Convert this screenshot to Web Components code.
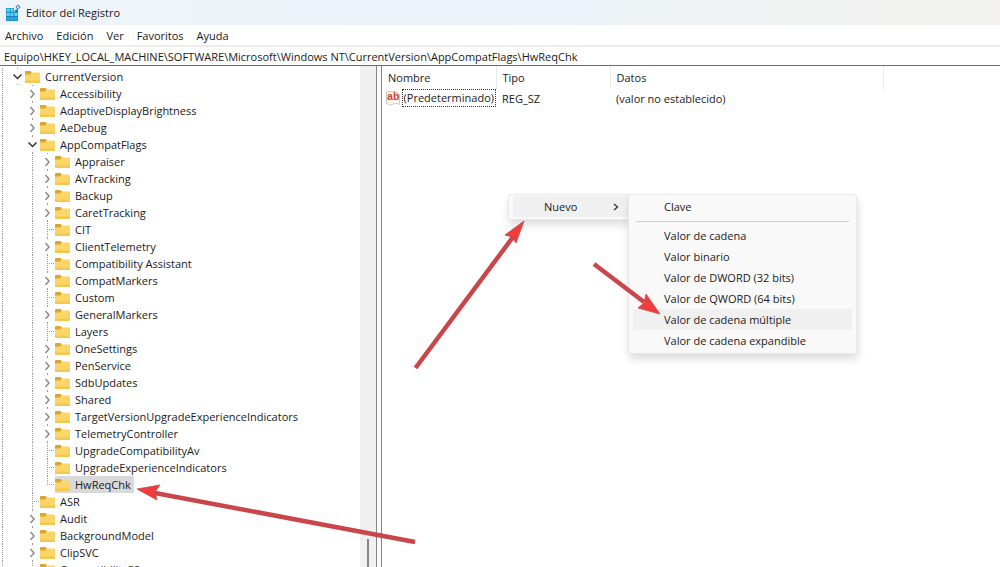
<!DOCTYPE html>
<html lang="es">
<head>
<meta charset="utf-8">
<title>Editor del Registro</title>
<style>
  html, body { margin: 0; height: 100%; overflow: hidden; background: #fff; }
  body { font: 11px/17px "Open Sans", "Noto Sans", sans-serif; color: #1a1a1a; }
</style>
</head>
<body>
<reg-window heading="Editor del Registro">
  <menu-bar slot="menu">
    <bar-item>Archivo</bar-item><bar-item>Edición</bar-item><bar-item>Ver</bar-item><bar-item>Favoritos</bar-item><bar-item>Ayuda</bar-item>
  </menu-bar>
  <address-bar slot="address" value="Equipo\HKEY_LOCAL_MACHINE\SOFTWARE\Microsoft\Windows NT\CurrentVersion\AppCompatFlags\HwReqChk"></address-bar>
  <key-tree slot="tree">
    <tree-row level="1" state="open">CurrentVersion</tree-row>
    <tree-row level="2" state="closed">Accessibility</tree-row>
    <tree-row level="2" state="closed">AdaptiveDisplayBrightness</tree-row>
    <tree-row level="2" state="closed">AeDebug</tree-row>
    <tree-row level="2" state="open">AppCompatFlags</tree-row>
    <tree-row level="3" state="closed">Appraiser</tree-row>
    <tree-row level="3" state="closed">AvTracking</tree-row>
    <tree-row level="3" state="closed">Backup</tree-row>
    <tree-row level="3" state="closed">CaretTracking</tree-row>
    <tree-row level="3">CIT</tree-row>
    <tree-row level="3" state="closed">ClientTelemetry</tree-row>
    <tree-row level="3">Compatibility Assistant</tree-row>
    <tree-row level="3" state="closed">CompatMarkers</tree-row>
    <tree-row level="3">Custom</tree-row>
    <tree-row level="3" state="closed">GeneralMarkers</tree-row>
    <tree-row level="3">Layers</tree-row>
    <tree-row level="3" state="closed">OneSettings</tree-row>
    <tree-row level="3" state="closed">PenService</tree-row>
    <tree-row level="3" state="closed">SdbUpdates</tree-row>
    <tree-row level="3" state="closed">Shared</tree-row>
    <tree-row level="3" state="closed">TargetVersionUpgradeExperienceIndicators</tree-row>
    <tree-row level="3" state="closed">TelemetryController</tree-row>
    <tree-row level="3">UpgradeCompatibilityAv</tree-row>
    <tree-row level="3">UpgradeExperienceIndicators</tree-row>
    <tree-row level="3" last selected>HwReqChk</tree-row>
    <tree-row level="2">ASR</tree-row>
    <tree-row level="2" state="closed">Audit</tree-row>
    <tree-row level="2" state="closed">BackgroundModel</tree-row>
    <tree-row level="2" state="closed">ClipSVC</tree-row>
    <tree-row level="2">Compatibility32</tree-row>
  </key-tree>
  <value-table slot="values"></value-table>
</reg-window>
<context-menu style="--x: 508px; --y: 194px; --w: 122px; --pad: 1px 0 2px 4px">
  <menu-entry submenu active>Nuevo</menu-entry>
</context-menu>
<context-menu style="--x: 628px; --y: 194px; --w: 229px; --pad: 1px 4px 2px">
  <menu-entry>Clave</menu-entry>
  <menu-rule></menu-rule>
  <menu-entry>Valor de cadena</menu-entry>
  <menu-entry>Valor binario</menu-entry>
  <menu-entry>Valor de DWORD (32 bits)</menu-entry>
  <menu-entry>Valor de QWORD (64 bits)</menu-entry>
  <menu-entry active>Valor de cadena múltiple</menu-entry>
  <menu-entry>Valor de cadena expandible</menu-entry>
</context-menu>
<arrow-layer></arrow-layer>

<script>
const define = (name, html, setup) => {
  const template = document.createElement('template');
  template.innerHTML = html;
  customElements.define(name, class extends HTMLElement {
    constructor() {
      super();
      this.attachShadow({ mode: 'open' }).append(template.content.cloneNode(true));
    }
    connectedCallback() { if (setup) setup(this, this.shadowRoot); }
  });
};

define('reg-window', `
<style>
  :host { display: grid; grid-template-rows: 25px 20px 21px minmax(0, 1fr); height: 100vh; }
  header { display: flex; align-items: center; gap: 5px; padding: 0 5px; background: linear-gradient(90deg, #eff4f9, #edf2fb 57%, #eef3f5 63%, #f3f2ef); }
  h1 { margin: 0; font: inherit; }
  main { display: grid; grid-template-columns: minmax(0, 376px) 6px minmax(0, 1fr); min-height: 0; }
  .split { box-sizing: border-box; background: #fafafa; border: solid #858585; border-width: 0 1px; }
</style>
<header>
  <svg width="16" height="18" viewBox="0 0 16 18" aria-hidden="true">
    <path d="M1 4h12v13H1z" fill="#1583bf"/>
    <path d="M1.500 4.500h3.300v3.300H1.500zM5.500 4.500h3v3.300h-3zM1.500 8.700h3.300v3.300H1.500zM5.500 8.700h3v3.300h-3zM9.300 8.700h3.200v3.300H9.300z" fill="#5ed0f5"/>
    <path d="M1.500 13h3.300v3.500H1.500zM5.500 13h3v3.500h-3zM9.300 13h3.200v3.500H9.300z" fill="#2fa6dc"/>
    <path d="M9 4h4v4H9z" fill="#dff0fa"/>
    <path d="M9 7l3-2 1.500 2-2 1.500z" fill="#1b6fa8"/>
    <path d="M13 1l2.200 2L13 5.200 10.800 3z" fill="#bfe3f5" stroke="#2f7ea9"/>
  </svg>
  <h1></h1>
</header>
<slot name="menu"></slot><slot name="address"></slot>
<main><slot name="tree"></slot><div class="split"></div><slot name="values"></slot></main>`,
(host, root) => { root.querySelector('h1').textContent = host.getAttribute('heading'); });

define('menu-bar', `
<style>:host { display: flex; align-items: center; gap: 13px; padding: 0 5px; background: #fff; }</style>
<slot></slot>`);

define('bar-item', `
<style>
  :host { display: block; }
  button { all: unset; display: block; }
</style>
<button type="button"><slot></slot></button>`);

define('address-bar', `
<style>
  :host { display: flex; box-sizing: border-box; border-top: 2px solid #ececec; border-bottom: 1px solid #6c6c6c; background: #fff; }
  input { flex: 1; min-width: 0; border: 0; outline: 0; margin: 0; padding: 0 4px; font: inherit; color: inherit; background: none; }
</style>
<input type="text" aria-label="Ruta de la clave">`,
(host, root) => { root.querySelector('input').value = host.getAttribute('value'); });

define('key-tree', `
<style>
  :host { display: grid; grid-template-columns: minmax(0, 1fr) 16px; min-height: 0; overflow: hidden; }
  .rows { overflow: hidden; padding-top: 2px; }
  .track { display: flex; flex-direction: column; justify-content: flex-end; align-items: center; background: #f0f0f0; }
  .thumb { width: 2px; height: 28px; background: #858585; }
</style>
<div class="rows" role="tree"><slot></slot></div>
<div class="track"><div class="thumb"></div></div>`);

define('tree-row', `
<style>
  :host { display: flex; height: 17px; white-space: nowrap; --dots: repeating-linear-gradient(#999 0 1px, transparent 1px 2px); }
  .root, .guide, .toggle { flex: none; width: 15px; background: var(--dots) 7px 0 / 1px 100% no-repeat; }
  .root { width: 10px; background-position: 2px 0; }
  .blank { background: none; }
  .toggle { display: flex; align-items: center; justify-content: center; }
  button { all: unset; display: flex; background: #fff; padding: 2px 0; }
  svg { display: block; }
  .dash { width: 6px; height: 1px; margin-left: 9px; background: repeating-linear-gradient(90deg, #999 0 1px, transparent 1px 2px); }
  :host([last]) .toggle { background-size: 1px 9px; }
  .item { display: flex; align-items: center; gap: 5px; padding-right: 3px; }
  :host([selected]) .item { background: #d9d9d9; }
</style>
<span class="root"></span><span class="toggle"></span>
<span class="item" role="treeitem">
  <svg width="15" height="14" viewBox="0 0 15 14" aria-hidden="true">
    <path d="M0 2q0-1 1-1h4.500L7 2.500 5.500 5H0z" fill="#dba52e"/>
    <path d="M0 4.500h5L7 2.500h7q1 0 1 1v8.500q0 1-1 1H1q-1 0-1-1z" fill="#fbd667"/>
    <path d="M0 10.500h15V12q0 1-1 1H1q-1 0-1-1z" fill="#f3c750"/>
  </svg>
  <span><slot></slot></span>
</span>`,
(host, root) => {
  const level = +host.getAttribute('level');
  const state = host.getAttribute('state');
  const toggle = root.querySelector('.toggle');
  for (let i = 1; i < level; i++) {
    const guide = document.createElement('span');
    guide.className = i === 1 ? 'guide blank' : 'guide';
    toggle.before(guide);
  }
  if (!state) { toggle.innerHTML = '<span class="dash"></span>'; return; }
  const open = state === 'open';
  toggle.innerHTML = `<button type="button" aria-label="${open ? 'Contraer' : 'Expandir'}">
    <svg width="9" height="9" viewBox="0 0 9 9"><path fill="none" stroke="${open ? '#333' : '#8c8c8c'}" stroke-width="1.500"
    d="${open ? 'M.5 2.500l4 4 4-4' : 'M2.500 1l3.500 4-3.500 4'}"/></svg></button>`;
});

define('value-table', `
<style>
  :host { display: block; min-width: 0; background: #fff; }
  table { width: 100%; table-layout: fixed; border-collapse: collapse; }
  th, td { padding: 0 6px; text-align: left; font-weight: 400; white-space: nowrap; }
  th { height: 23px; border-right: 1px solid #e9e9e9; }
  th:last-child { border: 0; }
  td { height: 18px; }
  td:first-child { padding: 0 0 0 4px; }
  .name { display: flex; align-items: center; gap: 1px; }
  .name span { border: 1px dotted #333; padding: 0 1px; line-height: 16px; }
</style>
<table>
  <colgroup><col style="width:114px"><col style="width:114px"><col style="width:273px"><col></colgroup>
  <thead><tr><th>Nombre</th><th>Tipo</th><th>Datos</th><th></th></tr></thead>
  <tbody><tr><td><div class="name">
    <svg width="15" height="16" viewBox="0 0 15 16" aria-hidden="true">
      <path d="M.5 1.500h10l3.500 3v10q-4-2-7 0t-6.500-1z" fill="#fff6f3" stroke="#d2c6c4"/>
      <text x="1" y="10" font-family="Liberation Sans" font-size="11" font-weight="700" fill="#c8452b">ab</text>
    </svg><span>(Predeterminado)</span></div></td><td>REG_SZ</td><td>(valor no establecido)</td><td></td></tr></tbody>
</table>`);

define('context-menu', `
<style>
  :host { position: absolute; left: var(--x); top: var(--y); width: var(--w); box-sizing: border-box; padding: var(--pad);
    background: #f9f9f9; border: 1px solid #e9e9e9; border-radius: 3px; box-shadow: 1px 5px 9px rgba(0,0,0,.14); }
</style>
<div role="menu"><slot></slot></div>`);

define('menu-entry', `
<style>
  :host { display: block; }
  button { all: unset; box-sizing: border-box; display: flex; align-items: center; justify-content: space-between; width: 100%; height: 21px; padding: 0 9px 0 31px; border-radius: 2px; }
  :host([active]) button { background: #f0f0f0; }
  svg { display: none; }
  :host([submenu]) svg { display: block; }
</style>
<button type="button" role="menuitem"><span><slot></slot></span>
<svg width="8" height="10" viewBox="0 0 8 10" aria-hidden="true"><path d="M2 2l3.500 3L2 8" fill="none" stroke="#333" stroke-width="1.300"/></svg></button>`);

define('menu-rule', `
<style>:host { display: block; height: 1px; margin: 4px 3px 3px; background: #d0d0d0; }</style>`);

define('arrow-layer', `
<style>
  :host { position: absolute; left: 0; top: 0; pointer-events: none; }
  svg { display: block; }
</style>
<svg width="1000" height="567" viewBox="0 0 1000 567" aria-hidden="true">
  <g stroke="#c9464b" stroke-width="4.500" fill="none"><path d="M415.500 368L513 237M594 264l50 38M415 542l-260-49"/></g>
  <g fill="#ee3d3c" stroke="#c9464b" stroke-width=".8">
    <path d="M524 221l-8 22-4-6-7-2z"/>
    <path d="M660 314l-22-6 6-5 2-9z"/>
    <path d="M137 489l23-4-5 7 2 8z"/>
  </g>
</svg>`);
</script>
</body>
</html>
